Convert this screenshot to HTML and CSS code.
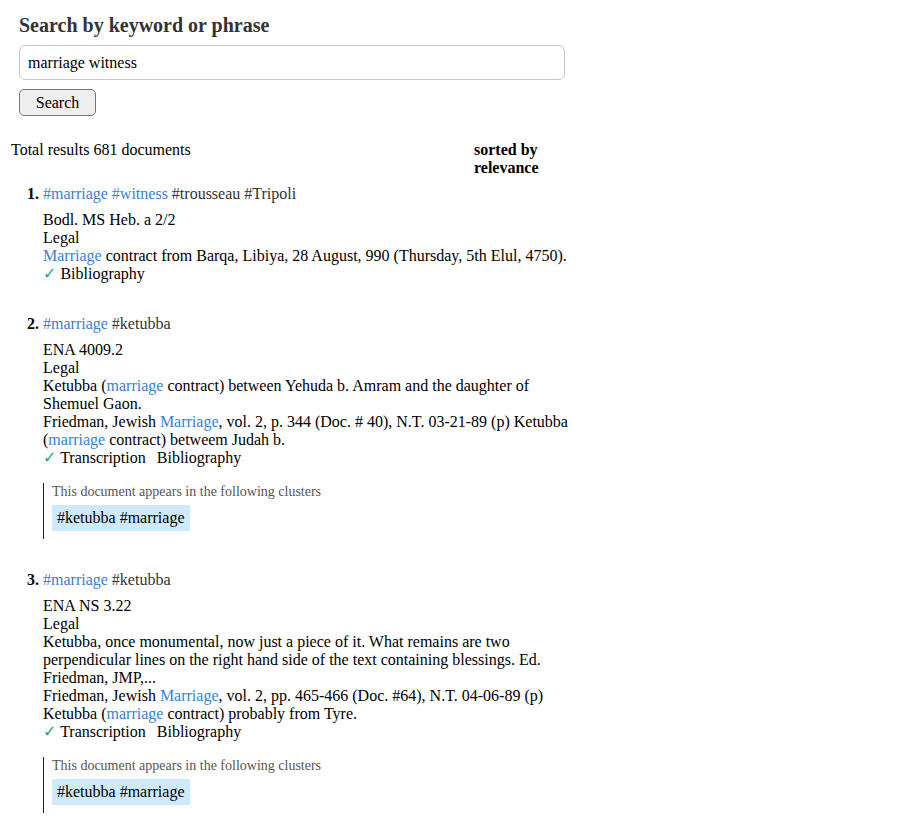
FILE: index.html
```html
<!DOCTYPE html>
<html lang="en">
<head>
<meta charset="utf-8">
<title>Search</title>
<link rel="stylesheet" href="styles.css">
</head>
<body>
<form class="search-form">
  <h2 class="search-title">Search by keyword or phrase</h2>
  <input class="search-input" type="text" value="marriage witness">
  <button class="search-button" type="button">Search</button>
</form>

<section class="results">
  <div class="results-head">
    <div class="results-total">Total results 681 documents</div>
    <div class="results-sort">sorted by relevance</div>
  </div>

  <ol class="result-list">
    <li class="result">
      <div class="tags"><span class="hit">#marriage</span> <span class="hit">#witness</span> <span class="tag">#trousseau</span> <span class="tag">#Tripoli</span></div>
      <div class="details">
        <div>Bodl. MS Heb. a 2/2</div>
        <div>Legal</div>
        <div><span class="hit">Marriage</span> contract from Barqa, Libiya, 28 August, 990 (Thursday, 5th Elul, 4750).</div>
        <div class="extras"><span class="check">✓</span> <span class="extra">Bibliography</span></div>
      </div>
    </li>

    <li class="result">
      <div class="tags"><span class="hit">#marriage</span> <span class="tag">#ketubba</span></div>
      <div class="details">
        <div>ENA 4009.2</div>
        <div>Legal</div>
        <div>Ketubba (<span class="hit">marriage</span> contract) between Yehuda b. Amram and the daughter of Shemuel Gaon.</div>
        <div>Friedman, Jewish <span class="hit">Marriage</span>, vol. 2, p. 344 (Doc. # 40), N.T. 03-21-89 (p) Ketubba (<span class="hit">marriage</span> contract) betweem Judah b.</div>
        <div class="extras"><span class="check">✓</span> <span class="extra">Transcription</span> <span class="extra">Bibliography</span></div>
      </div>
      <div class="clusters">
        <div class="clusters-caption">This document appears in the following clusters</div>
        <span class="cluster-chip">#ketubba #marriage</span>
      </div>
    </li>

    <li class="result">
      <div class="tags"><span class="hit">#marriage</span> <span class="tag">#ketubba</span></div>
      <div class="details">
        <div>ENA NS 3.22</div>
        <div>Legal</div>
        <div>Ketubba, once monumental, now just a piece of it. What remains are two perpendicular lines on the right hand side of the text containing blessings. Ed. Friedman, JMP,...</div>
        <div>Friedman, Jewish <span class="hit">Marriage</span>, vol. 2, pp. 465-466 (Doc. #64), N.T. 04-06-89 (p) Ketubba (<span class="hit">marriage</span> contract) probably from Tyre.</div>
        <div class="extras"><span class="check">✓</span> <span class="extra">Transcription</span> <span class="extra">Bibliography</span></div>
      </div>
      <div class="clusters">
        <div class="clusters-caption">This document appears in the following clusters</div>
        <span class="cluster-chip">#ketubba #marriage</span>
      </div>
    </li>
  </ol>
</section>
</body>
</html>
```

FILE: styles.css
```css
html, body {
  margin: 0;
  padding: 0;
  background: #fff;
}

body {
  font-family: "Liberation Serif", "Times New Roman", serif;
  font-size: 16px;
  line-height: 18px;
  color: #000;
}

.search-form {
  display: flex;
  flex-direction: column;
  align-items: flex-start;
  padding: 14px 0 0 19px;
}

.search-title {
  margin: 0;
  font-size: 20px;
  line-height: 23px;
  font-weight: bold;
  color: #333;
}

.search-input {
  box-sizing: border-box;
  margin-top: 8px;
  width: 546px;
  height: 35px;
  padding: 0 8px;
  border: 1px solid #c8c8c8;
  border-radius: 6px;
  font-family: "Liberation Serif", "Times New Roman", serif;
  font-size: 16px;
  color: #000;
  background: #fff;
  outline: none;
}

.search-button {
  box-sizing: border-box;
  margin-top: 9px;
  width: 77px;
  height: 27px;
  padding: 0;
  border: 1px solid #767676;
  border-radius: 5px;
  background: #efefef;
  font-family: "Liberation Serif", "Times New Roman", serif;
  font-size: 16px;
  color: #000;
}

.results {
  width: 564px;
  margin: 25px 0 0 11px;
}

.results-head {
  display: flex;
  align-items: flex-start;
}

.results-total {
  width: 463px;
}

.results-sort {
  width: 80px;
  font-weight: bold;
}

.result-list {
  margin: 8px 0 0;
  padding-left: 32px;
}

.result {
  margin-bottom: 32px;
}

.result::marker {
  font-weight: bold;
}

.tags {
  color: #333;
}

.hit {
  color: #3a7fd6;
}

.details {
  margin-top: 8px;
}

.check {
  color: #1ea672;
  font-family: "DejaVu Sans", sans-serif;
  font-size: 16px;
  font-weight: bold;
  line-height: 18px;
}

.extra + .extra {
  margin-left: 7px;
}

.clusters {
  margin-top: 16px;
  border-left: 1px solid #222;
  padding: 1px 0 8px 8px;
  display: flex;
  flex-direction: column;
  align-items: flex-start;
}

.clusters-caption {
  font-size: 14px;
  line-height: 16px;
  color: #555;
}

.cluster-chip {
  margin-top: 5px;
  padding: 4px 5px;
  background: #cfeafd;
  color: #000;
}
```
